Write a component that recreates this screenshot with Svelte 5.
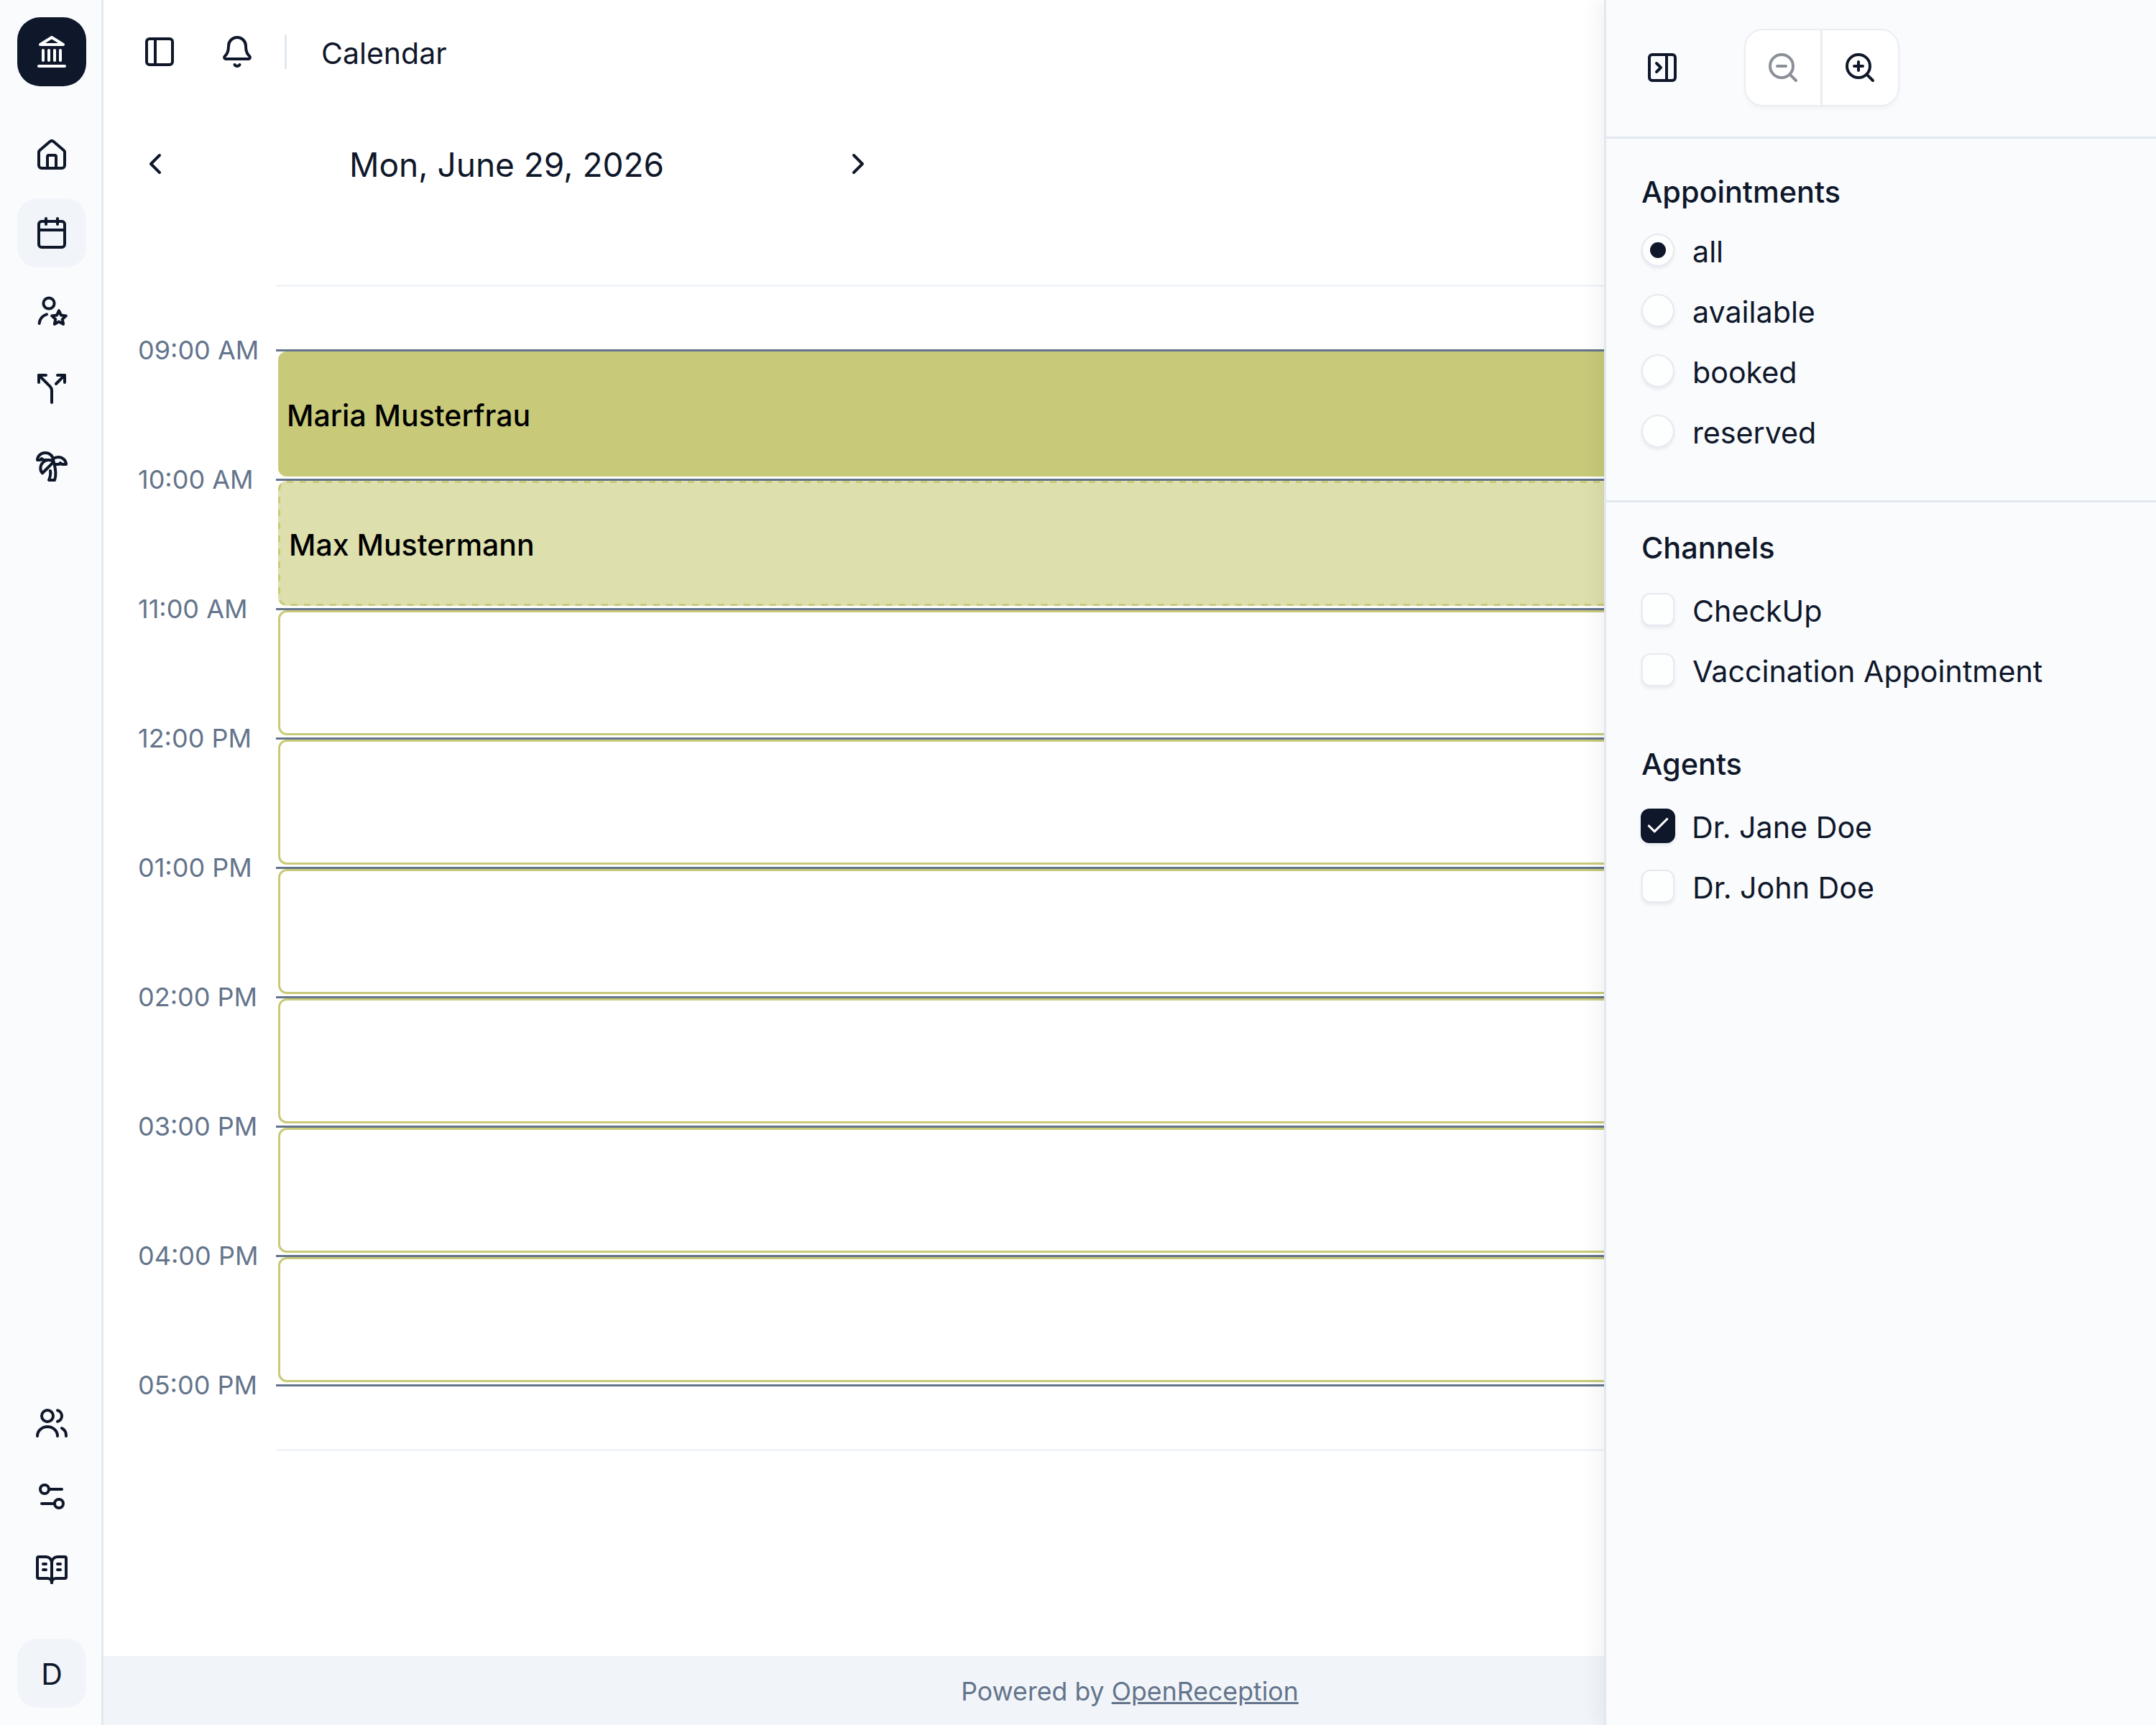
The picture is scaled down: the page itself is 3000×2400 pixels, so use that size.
<script>
  const hours = ['09:00 AM','10:00 AM','11:00 AM','12:00 PM','01:00 PM','02:00 PM','03:00 PM','04:00 PM'];
  const slots = [{kind:'booked',name:'Maria Musterfrau'},{kind:'reserved',name:'Max Mustermann'},{kind:'free',name:''},{kind:'free',name:''},{kind:'free',name:''},{kind:'free',name:''},{kind:'free',name:''},{kind:'free',name:''}];
  const radios = [{label:'all',on:true},{label:'available',on:false},{label:'booked',on:false},{label:'reserved',on:false}];
</script>

<div class="root">
  <aside class="rail">
    <div class="logo">
      <svg class="ico" viewBox="0 0 24 24"><line x1="3" x2="21" y1="22" y2="22"/><line x1="6" x2="6" y1="18" y2="11"/><line x1="10" x2="10" y1="18" y2="11"/><line x1="14" x2="14" y1="18" y2="11"/><line x1="18" x2="18" y1="18" y2="11"/><polygon points="12 2 20 7 4 7"/></svg>
    </div>
    <nav class="rail-nav">
      <div class="rail-btn"><svg class="ico" viewBox="0 0 24 24"><path d="M15 21v-8a1 1 0 0 0-1-1h-4a1 1 0 0 0-1 1v8"/><path d="M3 10a2 2 0 0 1 .709-1.528l7-5.999a2 2 0 0 1 2.582 0l7 5.999A2 2 0 0 1 21 10v9a2 2 0 0 1-2 2H5a2 2 0 0 1-2-2z"/></svg></div>
      <div class="rail-btn active"><svg class="ico" viewBox="0 0 24 24"><path d="M8 2v4"/><path d="M16 2v4"/><rect width="18" height="18" x="3" y="4" rx="2"/><path d="M3 10h18"/></svg></div>
      <div class="rail-btn"><svg class="ico" viewBox="0 0 24 24"><circle cx="10" cy="7" r="3.8"/><path d="M3.3 21a7 7 0 0 1 5.2-6.3"/><polygon points="17,12.1 18.47,15.28 21.95,15.7 19.38,18.07 20.06,21.5 17,19.8 13.94,21.5 14.62,18.07 12.05,15.7 15.53,15.28"/></svg></div>
      <div class="rail-btn"><svg class="ico" viewBox="0 0 24 24"><path d="M16 3h5v5"/><path d="M8 3H3v5"/><path d="M12 22v-8.3a4 4 0 0 0-1.172-2.872L3 3"/><path d="m15 9 6-6"/></svg></div>
      <div class="rail-btn"><svg class="ico" viewBox="0 0 24 24"><path d="M13 8c0-2.76-2.46-5-5.5-5S2 5.24 2 8h2l1-1 1 1h4"/><path d="M13 7.14A5.82 5.82 0 0 1 16.5 6c3.04 0 5.5 2.24 5.5 5h-3l-1-1-1 1h-3"/><path d="M5.89 9.71c-2.15 2.15-2.3 5.47-.35 7.43l4.24-4.25.7-.7.71-.71 2.12-2.12c-1.95-1.96-5.27-1.8-7.42.35"/><path d="M11 15.5c.5 2.5-.17 4.5-1 6.5h4c2-5.5-.5-12-1-14"/></svg></div>
    </nav>
    <div class="rail-bottom">
      <div class="rail-low"><svg class="ico" viewBox="0 0 24 24"><circle cx="9" cy="7" r="4"/><path d="M2 21a7 6.5 0 0 1 14 0"/><path d="M16 3.13a4 4 0 0 1 0 7.75"/><path d="M22 21a6 6 0 0 0-3-5.5"/></svg></div>
      <div class="rail-low"><svg class="ico" viewBox="0 0 24 24"><path d="M14 17H5"/><path d="M19 7h-9"/><circle cx="17" cy="17" r="3"/><circle cx="7" cy="7" r="3"/></svg></div>
      <div class="rail-low"><svg class="ico" viewBox="0 0 24 24"><path d="M12 7v14"/><path d="M16 12h2"/><path d="M16 8h2"/><path d="M3 18a1 1 0 0 1-1-1V4a1 1 0 0 1 1-1h5a4 4 0 0 1 4 4 4 4 0 0 1 4-4h5a1 1 0 0 1 1 1v13a1 1 0 0 1-1 1h-6a3 3 0 0 0-3 3 3 3 0 0 0-3-3z"/><path d="M6 12h2"/><path d="M6 8h2"/></svg></div>
      <div class="avatar">D</div>
    </div>
  </aside>

  <main class="main">
    <header class="top">
      <svg class="ico" viewBox="0 0 24 24"><rect width="18" height="18" x="3" y="3" rx="2"/><path d="M9 3v18"/></svg>
      <svg class="ico bell" viewBox="0 0 24 24"><path d="M10.268 21a2 2 0 0 0 3.464 0"/><path d="M3.262 15.326A1 1 0 0 0 4 17h16a1 1 0 0 0 .74-1.673C19.41 13.956 18 12.499 18 8A6 6 0 0 0 6 8c0 4.499-1.411 5.956-2.738 7.326"/></svg>
      <span class="sep"></span>
      <span class="crumb">Calendar</span>
    </header>

    <div class="datenav">
      <svg class="ico" viewBox="0 0 24 24"><path d="m15 18-6-6 6-6"/></svg>
      <span class="date">Mon, June 29, 2026</span>
      <svg class="ico" viewBox="0 0 24 24"><path d="m9 18 6-6-6-6"/></svg>
    </div>

    <section class="grid">
      {#each hours as h, i}
        <div class="row">
          <div class="time">{h}</div>
          <div class="cell">
            <div class="block {slots[i].kind}">
              {#if slots[i].kind === 'reserved'}
                <svg class="dash"><rect class="dash-rect" rx="10.5" /></svg>
              {/if}
              <span class="name">{slots[i].name}</span>
            </div>
          </div>
        </div>
      {/each}
      <div class="row last">
        <div class="time">05:00 PM</div>
        <div class="cell"></div>
      </div>
    </section>

    <footer class="foot">Powered by&nbsp;<span class="link">OpenReception</span></footer>
  </main>

  <aside class="panel">
    <div class="panel-head">
      <svg class="ico close" viewBox="0 0 24 24"><rect width="18" height="18" x="3" y="3" rx="2"/><path d="M15 3v18"/><path d="m8 9 3 3-3 3"/></svg>
      <div class="zoom">
        <div class="zbtn off"><svg class="ico" viewBox="0 0 24 24"><circle cx="11" cy="11" r="8"/><line x1="21" x2="16.65" y1="21" y2="16.65"/><line x1="8" x2="14" y1="11" y2="11"/></svg></div>
        <div class="zbtn"><svg class="ico" viewBox="0 0 24 24"><circle cx="11" cy="11" r="8"/><line x1="21" x2="16.65" y1="21" y2="16.65"/><line x1="11" x2="11" y1="8" y2="14"/><line x1="8" x2="14" y1="11" y2="11"/></svg></div>
      </div>
    </div>

    <section class="sec first">
      <h3>Appointments</h3>
      <div class="opts">
        {#each radios as r}
          <div class="opt"><span class="radio">{#if r.on}<span class="dot"></span>{/if}</span>{r.label}</div>
        {/each}
      </div>
    </section>

    <section class="sec second">
      <h3>Channels</h3>
      <div class="opts">
        <div class="opt"><span class="box"></span>CheckUp</div>
        <div class="opt"><span class="box"></span>Vaccination Appointment</div>
      </div>
      <h3 class="agents">Agents</h3>
      <div class="opts">
        <div class="opt"><span class="box on"><svg class="tick" viewBox="0 0 24 24"><path d="M20 6 9 17l-5-5"/></svg></span>Dr. Jane Doe</div>
        <div class="opt"><span class="box"></span>Dr. John Doe</div>
      </div>
    </section>
  </aside>
</div>

<style>
  :global(body) { margin: 0; background: #fff; }
  .root { position: relative; display: flex; width: 3000px; height: 2400px; overflow: hidden; font-family: Inter, "Noto Sans", sans-serif; color: #0f172a; font-size: 41px; }
  .ico { width: 48px; height: 48px; flex: none; fill: none; stroke: currentColor; stroke-width: 2; stroke-linecap: round; stroke-linejoin: round; display: block; }

  .rail { box-sizing: border-box; width: 144px; flex: none; display: flex; flex-direction: column; padding: 24px 0 24px 24px; background: #f9fbfd; border-right: 3px solid #e2e8f0; }
  .logo { width: 96px; height: 96px; border-radius: 32px; background: #0f172a; color: #fff; display: flex; align-items: center; justify-content: center; margin-bottom: 48px; }
  .rail-nav { display: flex; flex-direction: column; gap: 12px; }
  .rail-btn, .avatar, .rail-low { width: 96px; height: 96px; display: flex; align-items: center; justify-content: center; border-radius: 28px; }
  .active, .avatar { background: #f1f5f9; }
  .rail-bottom { margin-top: auto; display: flex; flex-direction: column; gap: 6px; }
  .avatar { margin-top: 42px; box-sizing: border-box; padding-top: 2px; }

  .main { flex: 1; min-width: 0; display: flex; flex-direction: column; }
  .top { height: 144px; flex: none; display: flex; align-items: center; padding-left: 54px; box-sizing: border-box; }
  .bell { margin-left: 60px; }
  .sep { width: 3px; height: 48px; background: #e2e8f0; margin: 0 48px 0 42px; }
  .crumb { font-size: 41px; padding-top: 3px; }

  .datenav { height: 168px; flex: none; box-sizing: border-box; width: 1026px; margin-left: 48px; display: flex; align-items: center; justify-content: space-between; margin-bottom: 84px; }
  .date { font-size: 46px; padding-top: 2px; }

  .grid { border-top: 3px solid #f1f5f9; border-bottom: 3px solid #f1f5f9; padding-top: 87px; flex: none; margin-left: 240px; }
  .row { display: grid; grid-template-columns: 240px 1fr; height: 180px; margin-left: -240px; }
  .row.last { height: 90px; }
  .time { height: 2px; display: flex; align-items: center; padding-left: 48px; font-size: 36px; color: #64748b; white-space: nowrap; }
  .cell { border-top: 3px solid #64748b; }
  .block { position: relative; box-sizing: border-box; height: 174px; margin: 0 0 3px 3px; border-radius: 12px; display: flex; align-items: center; padding-left: 12px; color: #000; font-weight: 500; font-size: 41px; }
  .name { padding-top: 3px; }
  .booked { background: #c8ca79; }
  .reserved { background: #dddfac; padding-left: 15px; }
  .free { background: #fff; border: 3px solid #c8ca79; }
  .dash { position: absolute; inset: 0; width: 100%; height: 100%; }
  .dash-rect { x: 1.5px; y: 1.5px; width: calc(100% - 3px); height: calc(100% - 3px); fill: none; stroke: #c8ca79; stroke-width: 3; stroke-dasharray: 9 9; }

  .foot { margin-top: auto; height: 96px; flex: none; box-sizing: border-box; padding-top: 2px; background: #f1f5f9; display: flex; align-items: center; justify-content: center; font-size: 35.7px; color: #64748b; }
  .link { text-decoration: underline; }

  .panel { position: absolute; top: 0; right: 0; bottom: 0; width: 768px; box-sizing: border-box; background: #f9fbfd; border-left: 3px solid #e2e8f0; box-shadow: -10px 0 24px rgba(0,0,0,.05); }
  .panel-head { height: 193px; box-sizing: border-box; border-bottom: 3px solid #e2e8f0; display: flex; align-items: flex-start; padding: 42px 0 0 54px; }
  .close { margin-top: 28px; }
  .zoom { margin-left: 92px; width: 212px; height: 104px; display: flex; border-radius: 24px; background: #fff; box-shadow: 0 0 0 2px #eaeef3, 0 4px 7px rgba(15,23,42,.05); overflow: hidden; }
  .zbtn { width: 104px; flex: none; display: flex; align-items: center; justify-content: center; }
  .zbtn + .zbtn { width: 107px; border-left: 3px solid #eaeef3; box-sizing: border-box; }
  .off { color: #8b8f97; }

  .sec { padding-left: 49px; }
  .first { padding-top: 44px; padding-bottom: 52px; border-bottom: 3px solid #e2e8f0; }
  .first h3 { margin-bottom: 11px; }
  .second { padding-top: 33px; }
  h3 { margin: 0; height: 60px; line-height: 60px; font-size: 41.4px; font-weight: 500; }
  .second h3 { margin-bottom: 16px; }
  .second h3.agents { margin-top: 57px; margin-bottom: 16px; }
  .opt { height: 84px; display: flex; align-items: center; gap: 25px; font-size: 41.2px; }
  .radio, .box { width: 46px; height: 46px; flex: none; box-sizing: border-box; background: #fdfefe; border: 2px solid #e6eaf0; box-shadow: 0 3px 5px rgba(15,23,42,.07); display: flex; align-items: center; justify-content: center; margin-top: -4px; }
  .radio { border-radius: 50%; }
  .dot { width: 22px; height: 22px; border-radius: 50%; background: #0f172a; }
  .box { border-radius: 12px; }
  .box.on { background: #0f172a; border-color: #0f172a; width: 48px; height: 48px; margin-right: -2px; margin-left: -1px; }
  .tick { width: 38px; height: 38px; fill: none; stroke: #fff; stroke-width: 2; stroke-linecap: round; stroke-linejoin: round; }
</style>
